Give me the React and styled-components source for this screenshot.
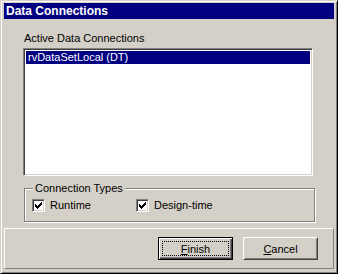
import React from "react";
import styled, { createGlobalStyle } from "styled-components";

const Global = createGlobalStyle`
  body {
    margin: 0;
    background: #d4d0c8;
  }
`;

const Window = styled.div`
  width: 338px;
  height: 274px;
  box-sizing: border-box;
  background: #d4d0c8;
  border: 1px solid;
  border-color: #d4d0c8 #000 #000 #d4d0c8;
  box-shadow: inset 1px 1px 0 #fff, inset -1px -1px 0 #808080;
  padding: 2px 3px 3px 3px;
  display: flex;
  flex-direction: column;
  font-family: "Liberation Sans", Arial, sans-serif;
  font-size: 11px;
  color: #000;
`;

const TitleBar = styled.div`
  height: 16px;
  background: #000080;
  color: #fff;
  font-weight: bold;
  font-size: 12px;
  line-height: 16px;
  padding-left: 2px;
`;

const Body = styled.div`
  flex: 1;
  display: flex;
  flex-direction: column;
  padding: 13px 0 0 19px;
`;

const Label = styled.div`
  line-height: 13px;
  margin-left: 1px;
  margin-bottom: 3px;
`;

const ListBox = styled.div`
  width: 290px;
  height: 128px;
  box-sizing: border-box;
  background: #fff;
  border: 1px solid;
  border-color: #808080 #fff #fff #808080;
  box-shadow: inset 1px 1px 0 #404040, inset -1px -1px 0 #d4d0c8;
  padding: 2px;
`;

const ListItem = styled.div`
  height: 13px;
  line-height: 13px;
  padding-left: 2px;
  background: ${p => (p.selected ? "#000080" : "transparent")};
  color: ${p => (p.selected ? "#fff" : "#000")};
`;

const Group = styled.div`
  position: relative;
  width: 291px;
  height: 34px;
  box-sizing: border-box;
  margin: 12px 0 0 1px;
  border: 1px solid #808080;
  box-shadow: inset 1px 1px 0 #fff, 1px 1px 0 #fff;
  display: flex;
  align-items: center;
  padding: 1px 0 0 7px;
`;

const Legend = styled.span`
  position: absolute;
  top: -7px;
  left: 8px;
  padding: 0 2px;
  background: #d4d0c8;
  line-height: 13px;
`;

const Check = styled.label`
  display: flex;
  align-items: center;
  gap: 5px;
  width: ${p => p.w}px;
  line-height: 13px;
`;

const Box = styled.span`
  width: 13px;
  height: 13px;
  box-sizing: border-box;
  background: #fff;
  border: 1px solid;
  border-color: #808080 #fff #fff #808080;
  box-shadow: inset 1px 1px 0 #404040, inset -1px -1px 0 #d4d0c8;
  position: relative;

  svg {
    position: absolute;
    left: -1px;
    top: -1px;
  }
`;

const Footer = styled.div`
  height: 41px;
  box-sizing: border-box;
  border: 1px solid;
  border-color: #fff #808080 #808080 #fff;
  display: flex;
  justify-content: flex-end;
  align-items: flex-start;
  gap: 10px;
  padding: 8px 15px 0 0;
  margin-bottom: 1px;
`;

const Button = styled.button`
  width: 75px;
  height: 23px;
  box-sizing: border-box;
  background: #d4d0c8;
  font-family: inherit;
  font-size: 11px;
  color: #000;
  padding: 0;
  border: 1px solid;
  border-color: ${p => (p.isDefault ? "#000" : "#fff #404040 #404040 #fff")};
  box-shadow: ${p =>
    p.isDefault
      ? "inset 1px 1px 0 #fff, inset -1px -1px 0 #404040, inset -2px -2px 0 #808080"
      : "inset 1px 1px 0 #d4d0c8, inset -1px -1px 0 #808080"};
  position: relative;
  display: flex;
  align-items: center;
  justify-content: center;

  u {
    text-decoration: underline;
  }
`;

const Focus = styled.span`
  position: absolute;
  inset: 3px;
  border: 1px dotted #000;
`;

function CheckMark() {
  const cols = [5, 6, 7, 6, 5, 4, 3];
  return (
    <svg width="13" height="13" shapeRendering="crispEdges">
      {cols.map((y, i) => (
        <rect key={i} x={3 + i} y={y} width="1" height="3" fill="#000" />
      ))}
    </svg>
  );
}

export default function App() {
  return (
    <>
      <Global />
      <Window>
        <TitleBar>Data Connections</TitleBar>
        <Body>
          <Label>Active Data Connections</Label>
          <ListBox>
            <ListItem selected>rvDataSetLocal (DT)</ListItem>
          </ListBox>
          <Group>
            <Legend>Connection Types</Legend>
            <Check w={104}>
              <Box><CheckMark /></Box>
              Runtime
            </Check>
            <Check w={120}>
              <Box><CheckMark /></Box>
              Design-time
            </Check>
          </Group>
        </Body>
        <Footer>
          <Button isDefault>
            <Focus />
            <span><u>F</u>inish</span>
          </Button>
          <Button>
            <span><u>C</u>ancel</span>
          </Button>
        </Footer>
      </Window>
    </>
  );
}
